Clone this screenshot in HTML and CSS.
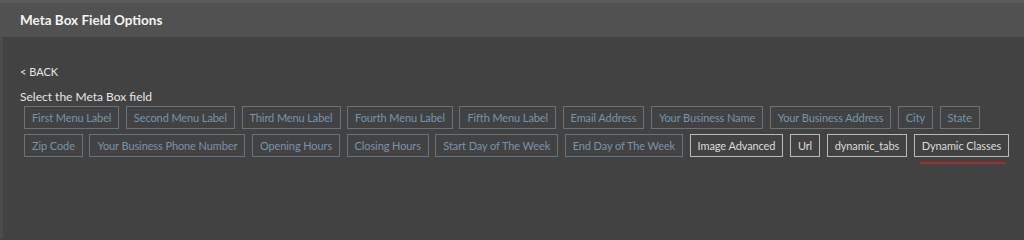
FILE: index.html
```html
<!DOCTYPE html>
<html>
<head>
<meta charset="utf-8">
<link rel="stylesheet" href="styles.css">
</head>
<body>
<div class="panel">
  <div class="header"><span class="title">Meta Box Field Options</span></div>
  <div class="content">
    <div class="back">&lt; BACK</div>
    <div class="label">Select the Meta Box field</div>
    <div class="fields">
      <span class="field">First Menu Label</span>
      <span class="field">Second Menu Label</span>
      <span class="field">Third Menu Label</span>
      <span class="field">Fourth Menu Label</span>
      <span class="field">Fifth Menu Label</span>
      <span class="field">Email Address</span>
      <span class="field">Your Business Name</span>
      <span class="field">Your Business Address</span>
      <span class="field">City</span>
      <span class="field">State</span>
      <span class="field">Zip Code</span>
      <span class="field">Your Business Phone Number</span>
      <span class="field">Opening Hours</span>
      <span class="field">Closing Hours</span>
      <span class="field">Start Day of The Week</span>
      <span class="field">End Day of The Week</span>
      <span class="field alt">Image Advanced</span>
      <span class="field alt">Url</span>
      <span class="field alt">dynamic_tabs</span>
      <span class="field alt marked">Dynamic Classes</span>
    </div>
  </div>
</div>
</body>
</html>
```
FILE: styles.css
```css
html, body {
  margin: 0;
  padding: 0;
  background: #424242;
  font-family: Lato, "Open Sans", sans-serif;
}
.panel {
  width: 1024px;
  height: 238px;
  background: #424242;
  border-top: 3px solid #5b5b5b;
  box-sizing: border-box;
}
.header {
  height: 34px;
  background: #515151;
  display: flex;
  align-items: center;
  padding-left: 20px;
}
.title {
  color: #f4f4f4;
  font-weight: 700;
  font-size: 13.5px;
}
.content {
  border-left: 3px solid #4c4c4c;
  height: 201px;
  box-sizing: border-box;
  padding: 28px 0 0 17px;
}
.back {
  color: #e6e6e6;
  font-size: 11px;
  line-height: 14px;
}
.label {
  color: #e6e6e6;
  font-size: 12px;
  line-height: 14px;
  margin-top: 11px;
}
.fields {
  display: flex;
  flex-wrap: wrap;
  gap: 5px 6.5px;
  width: 995px;
  margin-left: 4px;
  margin-top: 2px;
}
.field {
  position: relative;
  border: 1px solid #66737c;
  color: #7595ae;
  font-size: 11px;
  letter-spacing: -0.1px;
  line-height: 21px;
  padding: 0 7px;
}
.field.alt {
  border-color: #b9b9b9;
  color: #dcdcdc;
}
.field.marked::after {
  content: "";
  position: absolute;
  left: 4px;
  right: 2px;
  bottom: -8px;
  height: 2px;
  background: #a92b2b;
  border-radius: 1px;
}
```
